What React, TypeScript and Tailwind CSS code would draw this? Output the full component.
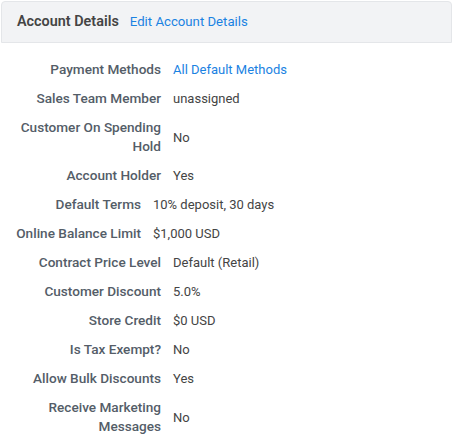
import React from 'react';

interface Row {
  label: string;
  value: string;
  link?: boolean;
}

const groups: { width: string; rows: Row[] }[] = [
  {
    width: 'w-[145px]',
    rows: [
      { label: 'Payment Methods', value: 'All Default Methods', link: true },
      { label: 'Sales Team Member', value: 'unassigned' },
      { label: 'Customer On Spending Hold', value: 'No' },
      { label: 'Account Holder', value: 'Yes' },
    ],
  },
  {
    width: 'w-[125px]',
    rows: [
      { label: 'Default Terms', value: '10% deposit, 30 days' },
      { label: 'Online Balance Limit', value: '$1,000 USD' },
    ],
  },
  {
    width: 'w-[145px]',
    rows: [
      { label: 'Contract Price Level', value: 'Default (Retail)' },
      { label: 'Customer Discount', value: '5.0%' },
      { label: 'Store Credit', value: '$0 USD' },
      { label: 'Is Tax Exempt?', value: 'No' },
      { label: 'Allow Bulk Discounts', value: 'Yes' },
      { label: 'Receive Marketing Messages', value: 'No' },
    ],
  },
];

export default function App() {
  return (
    <div className="w-[453px] h-[445px] bg-white font-['Roboto',sans-serif] text-[13px] overflow-hidden">
      {/* Header */}
      <div className="mx-px mt-px h-[42px] flex items-center pl-[15px] pr-4 bg-[#f2f3f5] border border-[#e4e6e9] rounded-t-[4px]">
        <h2 className="text-[14.4px] font-semibold text-[#444]">Account Details</h2>
        <a href="#" className="ml-[11px] text-[13.2px] text-[#1a82e2]">Edit Account Details</a>
      </div>

      {/* Details */}
      <div className="pt-[12px] pl-4">
        {groups.map((group, gi) => (
          <div key={gi}>
            {group.rows.map((row) => (
              <div key={row.label} className="flex items-center py-[5px] leading-[19px]">
                <div className={`${group.width} shrink-0 text-right text-[13.6px] font-medium text-[#545d68]`}>
                  {row.label}
                </div>
                <div className={`pl-3 ${row.link ? 'text-[#1a82e2]' : 'text-[#444]'}`}>{row.value}</div>
              </div>
            ))}
          </div>
        ))}
      </div>
    </div>
  );
}
